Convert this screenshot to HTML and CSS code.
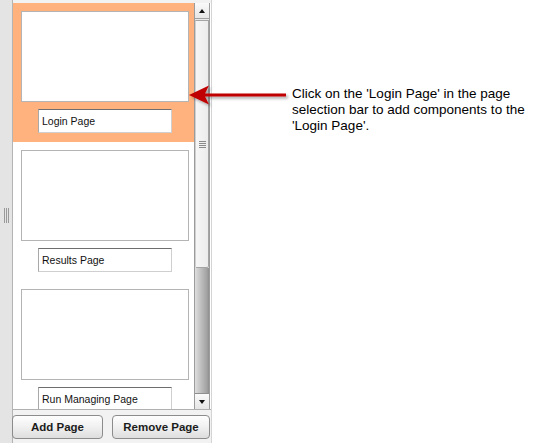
FILE: index.html
```html
<!DOCTYPE html>
<html lang="en">
<head>
    <meta charset="UTF-8">
    <title>Page Selection Bar</title>
    <link rel="stylesheet" href="styles.css">
</head>
<body>
    <div class="stage">
        <div class="panel">
            <div class="splitter"><span class="grip"></span></div>
            <div class="main">
                <div class="list-wrap">
                    <div class="list">
                        <div class="page-item selected">
                            <div class="thumb"></div>
                            <input class="page-name" type="text" value="Login Page">
                        </div>
                        <div class="page-item">
                            <div class="thumb"></div>
                            <input class="page-name" type="text" value="Results Page">
                        </div>
                        <div class="page-item">
                            <div class="thumb"></div>
                            <input class="page-name" type="text" value="Run Managing Page">
                        </div>
                    </div>
                    <div class="scrollbar">
                        <div class="sb-btn"><span class="tri up"></span></div>
                        <div class="sb-thumb"><span class="sb-grip"></span></div>
                        <div class="sb-track"></div>
                        <div class="sb-btn"><span class="tri down"></span></div>
                    </div>
                </div>
                <div class="actions">
                    <button class="btn add">Add Page</button>
                    <button class="btn remove">Remove Page</button>
                </div>
            </div>
        </div>
        <p class="note">Click on the 'Login Page' in the page selection bar to add components to the 'Login Page'.</p>

        <!-- callout arrow sits over the panel edge -->
        <svg class="arrow" width="110" height="30" viewBox="0 0 110 30">
            <defs>
                <filter id="shade" x="-20%" y="-50%" width="140%" height="200%">
                    <feDropShadow dx="2" dy="2" stdDeviation="1.5" flood-color="#000" flood-opacity="0.35"/>
                </filter>
            </defs>
            <path d="M2 14 L22 4.5 L18 12.5 L99 12.5 L99 15.5 L18 15.5 L22 23.5 Z" fill="#c00000" filter="url(#shade)"/>
        </svg>
    </div>
</body>
</html>
```

FILE: styles.css
```css
body {
    margin: 0;
    background: #fff;
    font-family: "Liberation Sans", Arial, sans-serif;
}
.stage {
    position: relative;
    display: flex;
    height: 443px;
    overflow: hidden;
}
.panel {
    display: flex;
    width: 212px;
    background: #f2f2f2;
    border-right: 1px solid #d4d4d4;
}
.splitter {
    width: 12px;
    background: #e4e4e4;
    border-right: 1px solid #b4b4b4;
    display: flex;
    align-items: center;
    justify-content: center;
}
.grip {
    width: 1px;
    height: 15px;
    margin-top: -12px;
    background: #999;
    box-shadow: 2px 0 0 #999, -2px 0 0 #999;
}
.main {
    display: flex;
    flex-direction: column;
    width: 198px;
}
.list-wrap {
    display: flex;
    height: 406px;
    margin-top: 3px;
    border-bottom: 1px solid #b0b0b0;
    background: #fff;
}
.list {
    width: 181px;
    overflow: hidden;
}
.page-item {
    height: 139px;
    padding-top: 8px;
    box-sizing: border-box;
}
.page-item.selected {
    background: #ffb17e;
}
.thumb {
    width: 166px;
    height: 89px;
    margin-left: 8px;
    background: #fff;
    border: 1px solid #b4b4b4;
}
.page-name {
    display: block;
    width: 134px;
    height: 24px;
    box-sizing: border-box;
    margin: 7px 0 0 25px;
    padding: 0 3px;
    border: 1px solid #cfcfcf;
    border-top-color: #6e6e6e;
    border-left-color: #a9a9a9;
    font-family: "Liberation Sans", Arial, sans-serif;
    font-size: 10.5px;
    color: #111;
    background: #fff;
}
.scrollbar {
    display: flex;
    flex-direction: column;
    width: 14px;
    border-left: 1px solid #9c9c9c;
    border-right: 1px solid #9c9c9c;
    background: #e8e8e8;
}
.sb-btn {
    height: 15px;
    display: flex;
    align-items: center;
    justify-content: center;
    background: linear-gradient(#fafafa, #e6e6e6);
    border-bottom: 1px solid #a0a0a0;
}
.sb-btn:last-child {
    border-bottom: none;
    border-top: 1px solid #8e8e8e;
}
.tri {
    width: 0;
    height: 0;
    border-left: 3px solid transparent;
    border-right: 3px solid transparent;
}
.tri.up {
    border-bottom: 4px solid #111;
}
.tri.down {
    border-top: 4px solid #111;
}
.sb-thumb {
    height: 246px;
    margin-top: 1px;
    background: linear-gradient(to right, #f6f6f6, #ececec);
    border: 1px solid #a4a4a4;
    border-left-color: #d0d0d0;
    border-radius: 0 0 2px 2px;
    display: flex;
    align-items: center;
    justify-content: center;
}
.sb-grip {
    width: 7px;
    height: 1px;
    background: #8a8a8a;
    box-shadow: 0 2px 0 #8a8a8a, 0 4px 0 #8a8a8a, 0 6px 0 #8a8a8a;
    margin-top: -6px;
}
.sb-track {
    flex: 1;
    background: linear-gradient(to right, #dedede, #bdbdbd 45%, #a2a2a2 85%, #8e8e8e);
}
.actions {
    display: flex;
    gap: 9px;
    padding-top: 5px;
    margin-left: -1px;
}
.btn {
    height: 24px;
    padding: 0;
    border: 1px solid #8c8c8c;
    border-radius: 4px;
    background: linear-gradient(#fefefe, #f0f0f0 50%, #dedede);
    font-family: "Liberation Sans", Arial, sans-serif;
    font-weight: bold;
    font-size: 11.5px;
    color: #1c1c1c;
}
.btn.add {
    width: 91px;
}
.btn.remove {
    width: 98px;
}
.note {
    width: 250px;
    margin: 86px 0 0 80px;
    font-size: 13.5px;
    line-height: 16px;
    color: #000;
}
.arrow {
    position: absolute;
    left: 187px;
    top: 81px;
}
```
